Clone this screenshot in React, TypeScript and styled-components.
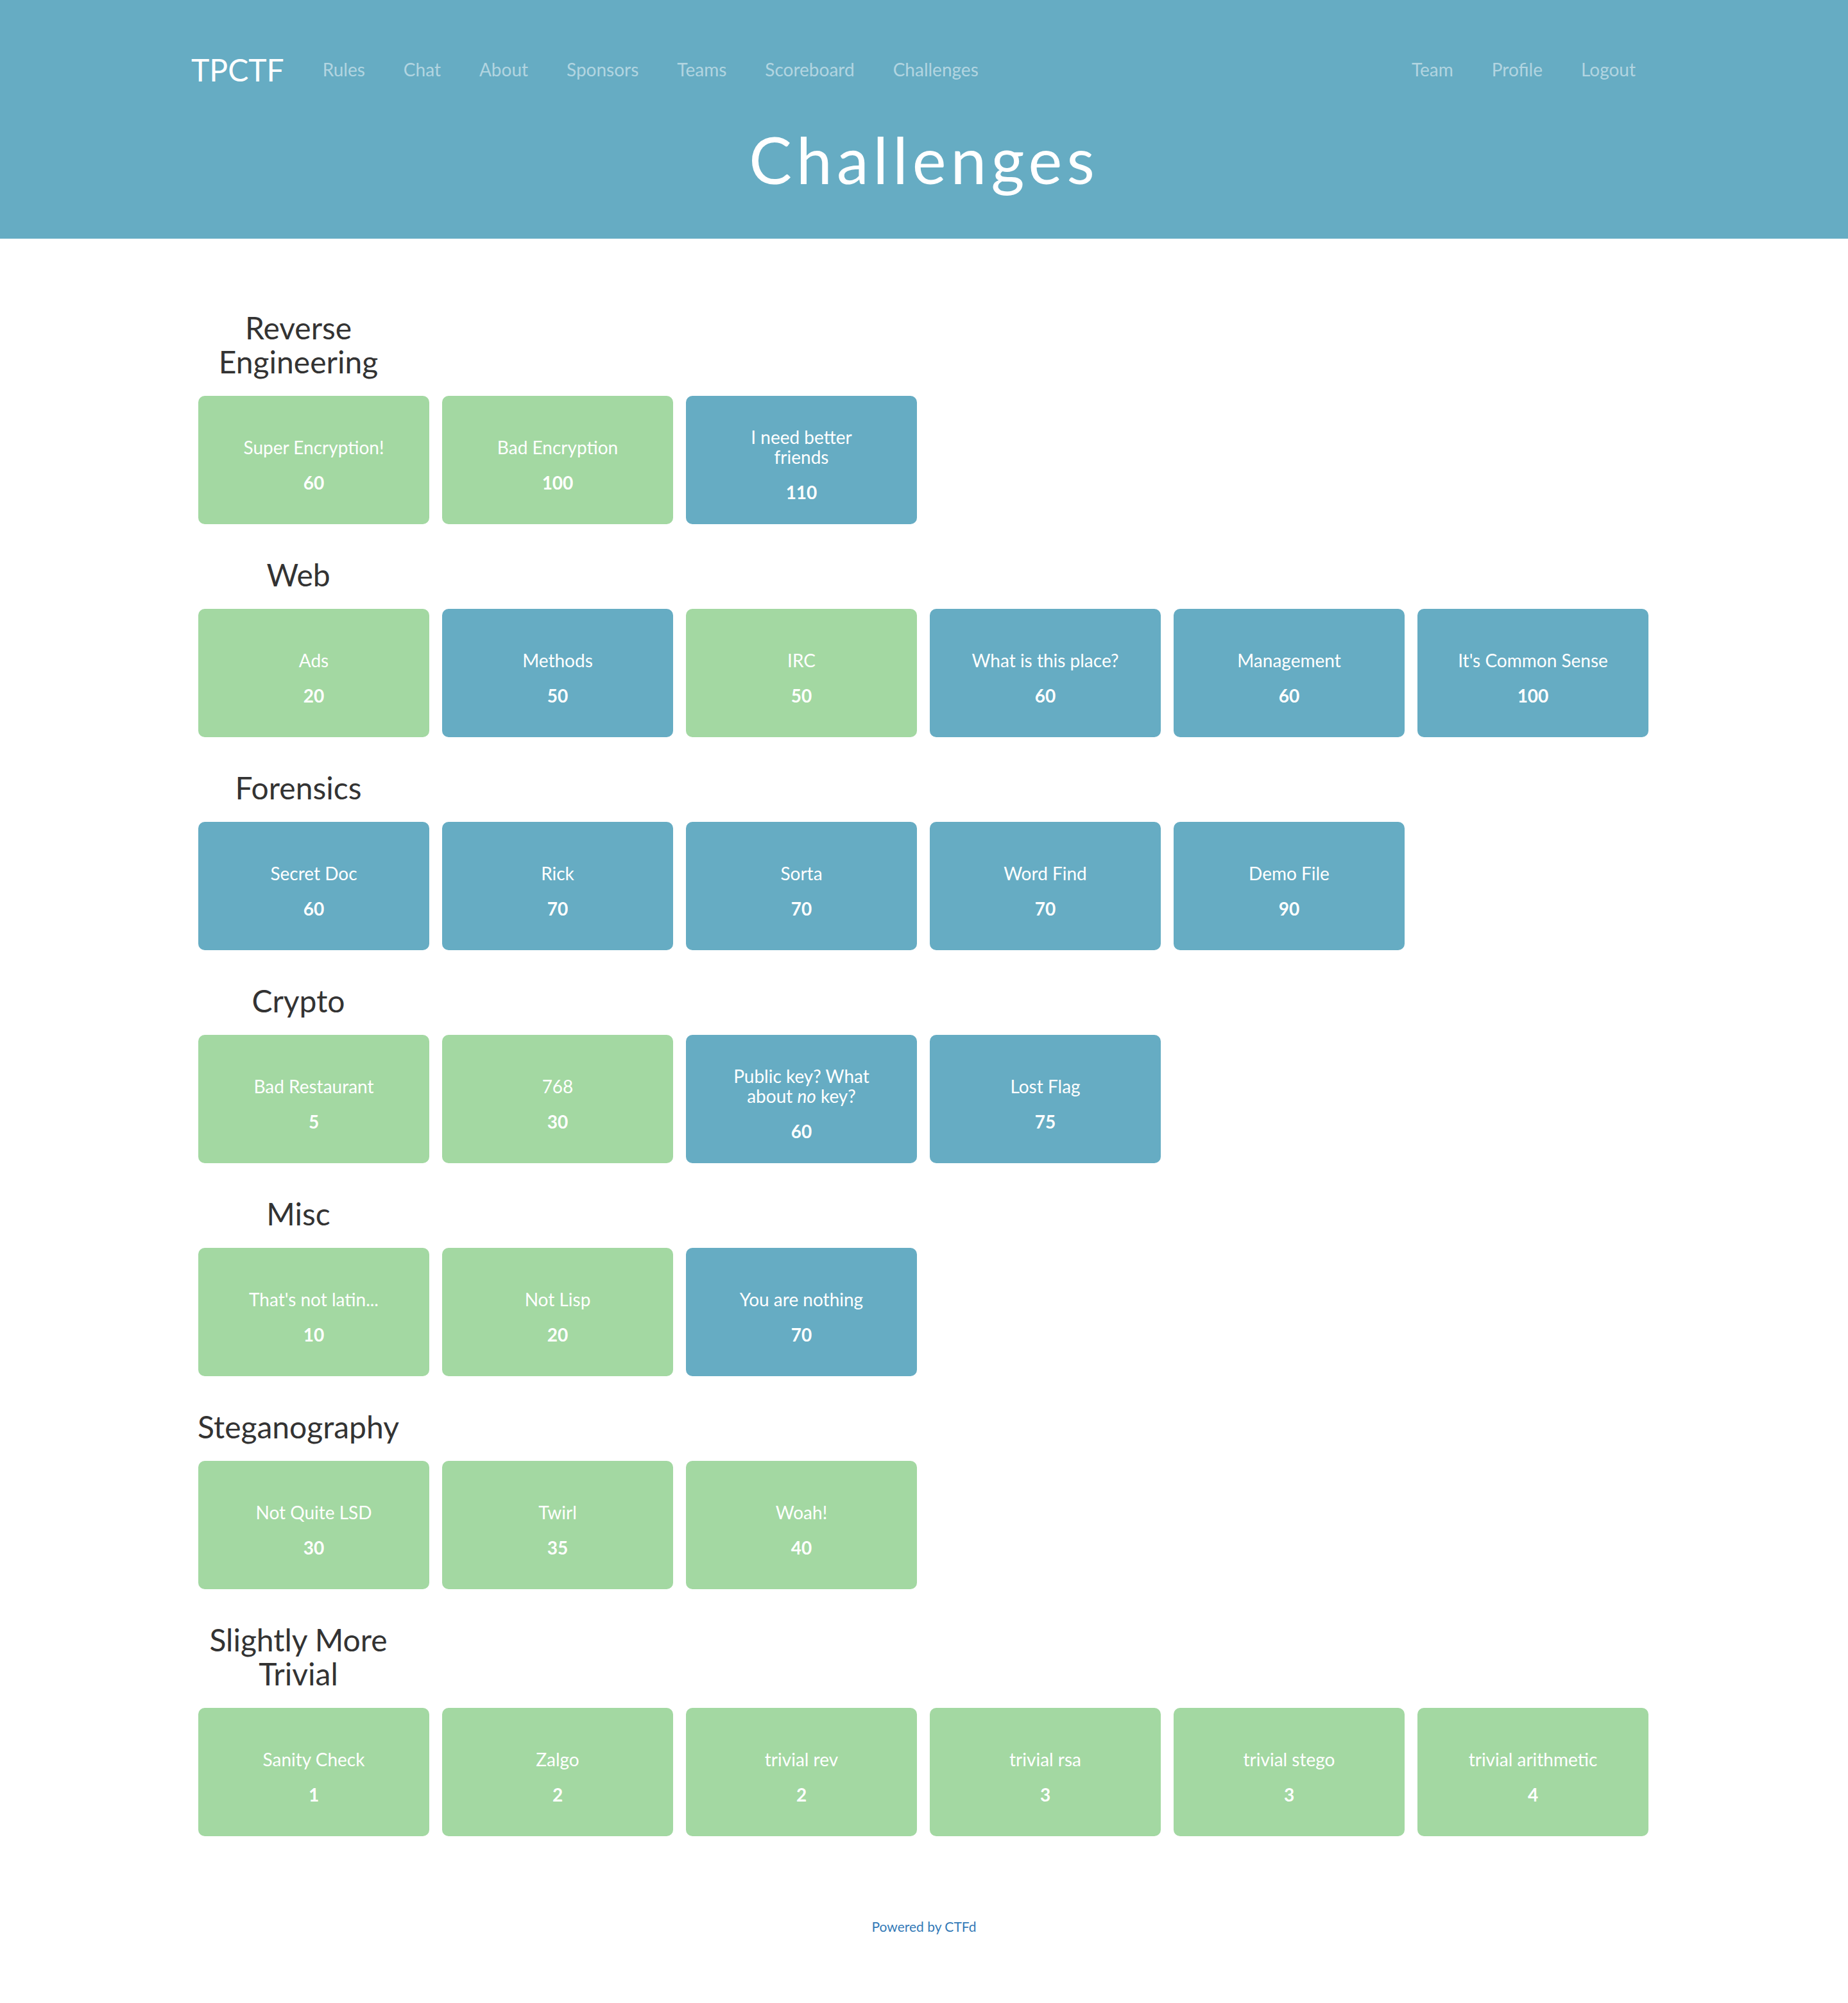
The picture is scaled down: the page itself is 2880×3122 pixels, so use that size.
import styled, { createGlobalStyle } from "styled-components";

const GlobalStyle = createGlobalStyle`
	body {
		margin: 0;
		background: #ffffff;
		font-family: Lato, "Open Sans", sans-serif;
		color: #333333;
	}
`;

const Header = styled.header`
	background-color: #66acc3;
	height: 372px;
	display: flex;
	flex-direction: column;
`;

const Nav = styled.nav`
	display: flex;
	align-items: center;
	height: 100px;
	margin-top: 58px;
	padding: 0 301px 0 268px;
`;

const Brand = styled.a`
	font-family: Lato, sans-serif;
	font-size: 48px;
	color: #ffffff;
	padding: 0 30px;
	text-decoration: none;
`;

const NavList = styled.ul<{ right?: boolean }>`
	display: flex;
	list-style: none;
	margin: 0;
	padding: 0;
	margin-left: ${(props) => (props.right ? "auto" : "0")};
`;

const NavLink = styled.a`
	display: block;
	padding: 0 30px;
	font-size: 28px;
	line-height: 40px;
	color: rgba(255, 255, 255, 0.5);
	text-decoration: none;
`;

const PageTitle = styled.h1`
	margin: 35px 0 0;
	text-align: center;
	font-size: 100px;
	line-height: 110px;
	font-weight: 400;
	letter-spacing: 7px;
	color: #ffffff;
`;

const Main = styled.main`
	padding: 112px 0 0 300px;
`;

const Section = styled.section`
	margin-bottom: 52px;
`;

const CategoryTitle = styled.h3`
	width: 330px;
	margin: 0;
	text-align: center;
	font-size: 48px;
	line-height: 53px;
	font-weight: 400;
	color: #333333;
`;

const CardRow = styled.div`
	display: flex;
	gap: 20px;
	margin-top: 27px;
	padding-left: 9px;
`;

const Card = styled.button<{ solved: boolean }>`
	width: 360px;
	height: 200px;
	border: none;
	border-radius: 10px;
	background-color: ${(props) => (props.solved ? "#a3d8a2" : "#66acc3")};
	color: #ffffff;
	font-family: Lato, sans-serif;
	display: flex;
	flex-direction: column;
	align-items: center;
	justify-content: center;
	padding: 14px 60px 0;
	cursor: pointer;
`;

const CardName = styled.span`
	font-size: 28px;
	line-height: 31px;
	text-align: center;
`;

const CardPoints = styled.span`
	margin-top: 24px;
	font-size: 28px;
	line-height: 30px;
	font-weight: 700;
`;

const Footer = styled.footer`
	margin-top: 126px;
	padding-bottom: 86px;
	text-align: center;
	font-size: 21px;
	line-height: 30px;
	a {
		color: #337ab7;
		text-decoration: none;
	}
`;

interface IChallenge {
	name: React.ReactNode;
	value: number;
	solved: boolean;
}

interface ICategory {
	title: string;
	challenges: IChallenge[];
}

const categories: ICategory[] = [
	{
		title: "Reverse Engineering",
		challenges: [
			{ name: "Super Encryption!", value: 60, solved: true },
			{ name: "Bad Encryption", value: 100, solved: true },
			{ name: "I need better friends", value: 110, solved: false },
		],
	},
	{
		title: "Web",
		challenges: [
			{ name: "Ads", value: 20, solved: true },
			{ name: "Methods", value: 50, solved: false },
			{ name: "IRC", value: 50, solved: true },
			{ name: "What is this place?", value: 60, solved: false },
			{ name: "Management", value: 60, solved: false },
			{ name: "It's Common Sense", value: 100, solved: false },
		],
	},
	{
		title: "Forensics",
		challenges: [
			{ name: "Secret Doc", value: 60, solved: false },
			{ name: "Rick", value: 70, solved: false },
			{ name: "Sorta", value: 70, solved: false },
			{ name: "Word Find", value: 70, solved: false },
			{ name: "Demo File", value: 90, solved: false },
		],
	},
	{
		title: "Crypto",
		challenges: [
			{ name: "Bad Restaurant", value: 5, solved: true },
			{ name: "768", value: 30, solved: true },
			{
				name: (
					<>
						Public key? What about <i>no</i> key?
					</>
				),
				value: 60,
				solved: false,
			},
			{ name: "Lost Flag", value: 75, solved: false },
		],
	},
	{
		title: "Misc",
		challenges: [
			{ name: "That's not latin...", value: 10, solved: true },
			{ name: "Not Lisp", value: 20, solved: true },
			{ name: "You are nothing", value: 70, solved: false },
		],
	},
	{
		title: "Steganography",
		challenges: [
			{ name: "Not Quite LSD", value: 30, solved: true },
			{ name: "Twirl", value: 35, solved: true },
			{ name: "Woah!", value: 40, solved: true },
		],
	},
	{
		title: "Slightly More Trivial",
		challenges: [
			{ name: "Sanity Check", value: 1, solved: true },
			{ name: "Zalgo", value: 2, solved: true },
			{ name: "trivial rev", value: 2, solved: true },
			{ name: "trivial rsa", value: 3, solved: true },
			{ name: "trivial stego", value: 3, solved: true },
			{ name: "trivial arithmetic", value: 4, solved: true },
		],
	},
];

const leftLinks = ["Rules", "Chat", "About", "Sponsors", "Teams", "Scoreboard", "Challenges"];
const rightLinks = ["Team", "Profile", "Logout"];

function App() {
	return (
		<>
			<GlobalStyle />
			<Header>
				<Nav>
					<Brand href="#">TPCTF</Brand>
					<NavList>
						{leftLinks.map((link) => (
							<li key={link}>
								<NavLink href="#">{link}</NavLink>
							</li>
						))}
					</NavList>
					<NavList right>
						{rightLinks.map((link) => (
							<li key={link}>
								<NavLink href="#">{link}</NavLink>
							</li>
						))}
					</NavList>
				</Nav>
				<PageTitle>Challenges</PageTitle>
			</Header>
			<Main>
				{categories.map((category) => (
					<Section key={category.title}>
						<CategoryTitle>{category.title}</CategoryTitle>
						<CardRow>
							{category.challenges.map((chal, i) => (
								<Card key={i} solved={chal.solved}>
									<CardName>{chal.name}</CardName>
									<CardPoints>{chal.value}</CardPoints>
								</Card>
							))}
						</CardRow>
					</Section>
				))}
			</Main>
			<Footer>
				<a href="#">Powered by CTFd</a>
			</Footer>
		</>
	);
}

export default App;
